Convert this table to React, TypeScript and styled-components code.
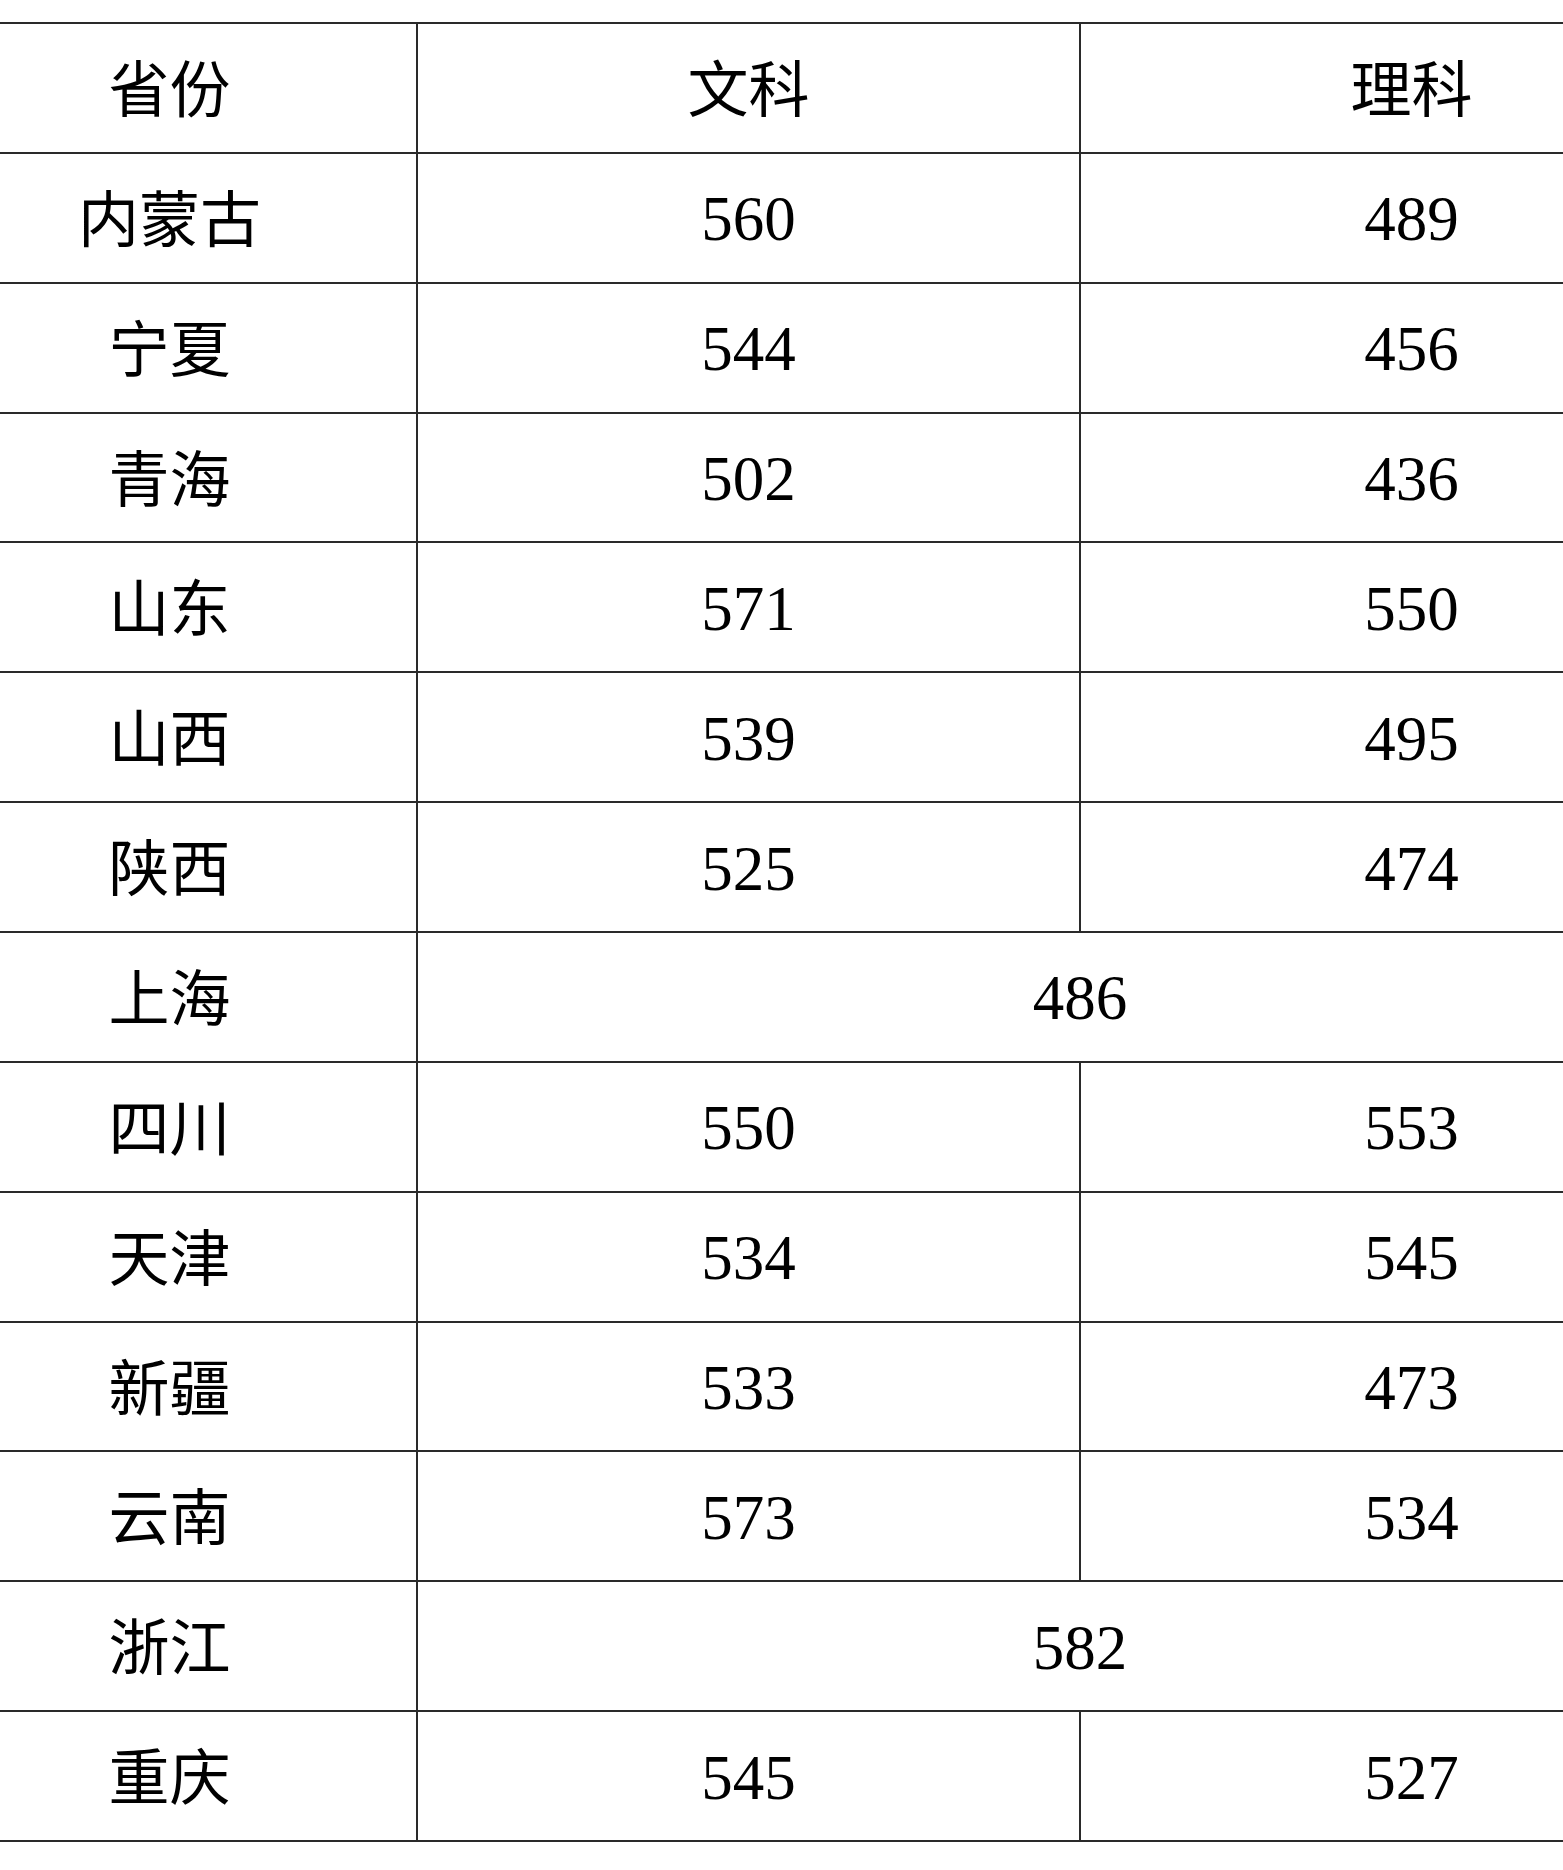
import React from "react";
import styled, { createGlobalStyle } from "styled-components";

const GlobalStyle = createGlobalStyle`
  html, body {
    margin: 0;
    padding: 0;
    background: #ffffff;
    overflow: hidden;
  }
`;

const Page = styled.div`
  width: 1563px;
  height: 1870px;
  overflow: hidden;
  padding-top: 22px;
  box-sizing: border-box;
`;

const Table = styled.table`
  border-collapse: collapse;
  margin-left: -77px;
  table-layout: fixed;
  width: 1820px;
  border-top: 2px solid #000;
  border-bottom: 2px solid #000;
`;

const Row = styled.tr`
  height: 129.86px;
`;

const Cell = styled.td`
  padding: 4px 0 0 0;
  border-top: 2px solid #2a2a2a;
  border-bottom: 2px solid #2a2a2a;
  border-right: 2px solid #2a2a2a;
  text-align: center;
  vertical-align: middle;
  color: #000;
  line-height: 1;
`;

const Province = styled.span`
  display: inline-block;
  padding-bottom: 9px;
  font-family: "Noto Sans CJK SC", "Noto Sans CJK TC", sans-serif;
  font-size: 61px;
  font-weight: 400;
`;

const Score = styled.span`
  font-family: "Liberation Serif", "DejaVu Serif", serif;
  font-size: 63px;
`;

type Line = { name: string; arts: string; sci?: string };

const rows: Line[] = [
  { name: "内蒙古", arts: "560", sci: "489" },
  { name: "宁夏", arts: "544", sci: "456" },
  { name: "青海", arts: "502", sci: "436" },
  { name: "山东", arts: "571", sci: "550" },
  { name: "山西", arts: "539", sci: "495" },
  { name: "陕西", arts: "525", sci: "474" },
  { name: "上海", arts: "486" },
  { name: "四川", arts: "550", sci: "553" },
  { name: "天津", arts: "534", sci: "545" },
  { name: "新疆", arts: "533", sci: "473" },
  { name: "云南", arts: "573", sci: "534" },
  { name: "浙江", arts: "582" },
  { name: "重庆", arts: "545", sci: "527" },
];

export default function App() {
  return (
    <>
      <GlobalStyle />
      <Page>
        <Table>
          <colgroup>
            <col style={{ width: 494 }} />
            <col style={{ width: 663 }} />
            <col style={{ width: 663 }} />
          </colgroup>
          <thead>
            <Row>
              <Cell as="th">
                <Province>省份</Province>
              </Cell>
              <Cell as="th">
                <Province>文科</Province>
              </Cell>
              <Cell as="th">
                <Province>理科</Province>
              </Cell>
            </Row>
          </thead>
          <tbody>
            {rows.map((r) => (
              <Row key={r.name}>
                <Cell>
                  <Province>{r.name}</Province>
                </Cell>
                {r.sci ? (
                  <>
                    <Cell>
                      <Score>{r.arts}</Score>
                    </Cell>
                    <Cell>
                      <Score>{r.sci}</Score>
                    </Cell>
                  </>
                ) : (
                  <Cell colSpan={2}>
                    <Score>{r.arts}</Score>
                  </Cell>
                )}
              </Row>
            ))}
          </tbody>
        </Table>
      </Page>
    </>
  );
}
